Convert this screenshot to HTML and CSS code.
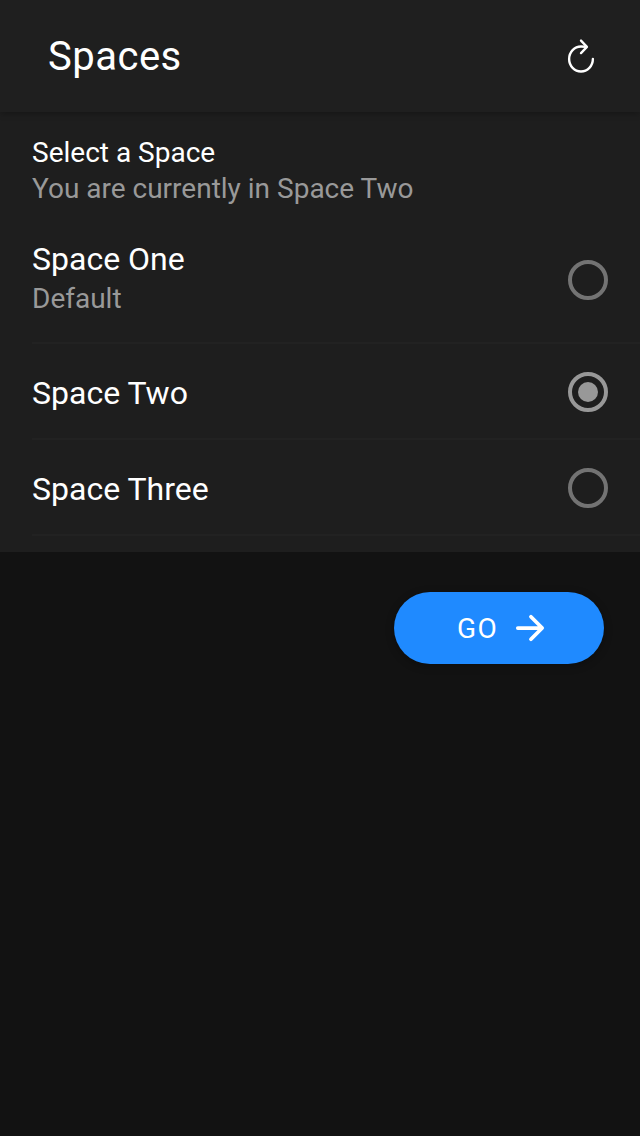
FILE: index.html
```html
<!DOCTYPE html>
<html lang="en">
<head>
<meta charset="utf-8">
<title>Spaces</title>
<link rel="stylesheet" href="styles.css">
</head>
<body>
<header class="toolbar">
  <h1 class="title">Spaces</h1>
  <button class="refresh" aria-label="Refresh">
    <svg width="38" height="40" viewBox="0 0 512 512" preserveAspectRatio="none" fill="none" stroke="#fff" stroke-width="32" stroke-linecap="round" stroke-miterlimit="10"><path d="M320 146s24.360-12-64-12a160 160 0 1 0 160 160"/><path d="M256 58l80 80-80 80" stroke-linejoin="round"/></svg>
  </button>
</header>
<main>
  <section class="list">
    <div class="list-header">
      <h2 class="heading">Select a Space</h2>
      <p class="note">You are currently in Space Two</p>
    </div>
    <div class="item tall">
      <div class="label"><div class="name">Space One</div><div class="note">Default</div></div>
      <span class="radio"></span>
    </div>
    <div class="item">
      <div class="label"><div class="name">Space Two</div></div>
      <span class="radio checked"></span>
    </div>
    <div class="item">
      <div class="label"><div class="name">Space Three</div></div>
      <span class="radio"></span>
    </div>
  </section>
  <div class="actions">
    <button class="go"><span class="go-text">GO</span>
      <svg width="40" height="40" viewBox="0 0 512 512" fill="none" stroke="#fff" stroke-width="48" stroke-linecap="round" stroke-linejoin="round"><path d="M268 112l144 144-144 144M392 256H100"/></svg>
    </button>
  </div>
</main>
</body>
</html>
```
FILE: styles.css
```css
* { box-sizing: border-box; }
body { margin: 0; min-height: 1136px; background: #121212; color: #fff; font-family: Roboto, sans-serif; }
h1, h2, p { margin: 0; font-weight: 400; }
button { border: 0; padding: 0; background: none; color: inherit; font-family: inherit; }
.toolbar { position: relative; height: 112px; padding: 0 40px 0 48px; display: flex; align-items: center; justify-content: space-between; background: #1f1f1f; box-shadow: 0 2px 6px rgba(0,0,0,.25); }
.title { padding-top: 1px; font-size: 40px; line-height: 48px; letter-spacing: .5px; }
.refresh svg { display: block; }
.list { height: 440px; background: #1e1e1e; }
.list-header { height: 110px; padding: 23px 32px 0; }
.heading { font-size: 28px; line-height: 36px; }
.note { font-size: 28px; line-height: 36px; color: #999; }
.item { height: 96px; margin-left: 32px; padding-right: 32px; display: flex; align-items: center; justify-content: space-between; box-shadow: inset 0 -2px #222; }
.label { padding-top: 2px; }
.tall { height: 122px; padding-bottom: 6px; }
.tall .label { padding: 0 0 5px; }
.tall .name { margin-bottom: 1px; }
.name { font-size: 32px; line-height: 42px; }
.radio { width: 40px; height: 40px; border: 4px solid #737373; border-radius: 50%; display: flex; align-items: center; justify-content: center; }
.checked { border-color: #989898; }
.checked::after { content: ""; width: 20px; height: 20px; border-radius: 50%; background: #989898; }
.actions { display: flex; justify-content: flex-end; padding: 40px 36px; }
.go { width: 210px; height: 72px; padding-left: 63px; border-radius: 36px; background: #1f8aff; display: flex; align-items: center; justify-content: flex-start; gap: 12px; box-shadow: 0 2px 8px rgba(0,0,0,.3); }
.go-text { font-size: 28px; letter-spacing: 1.4px; }
```
